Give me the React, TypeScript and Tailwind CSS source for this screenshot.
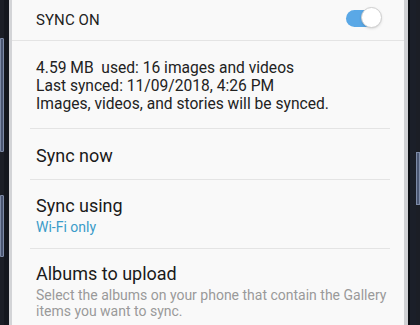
import { useState } from 'react'

// =====================
// Toggle - مفتاح التشغيل
// =====================
function Toggle({ on }: { on: boolean }) {
  return (
    <div className="relative w-[36px] h-[22px] flex items-center">
      <div className={on ? 'w-[34px] h-[17px] rounded-full bg-[#5aa8e6]' : 'w-[34px] h-[17px] rounded-full bg-[#c8c8c8]'} />
      <div className="absolute right-0 top-0 w-[21px] h-[21px] rounded-full bg-white border border-[#cfcfcf] shadow-sm" />
    </div>
  )
}

function Divider({ inset = true }: { inset?: boolean }) {
  return <div className={inset ? 'h-px bg-[#e4e4e4] ml-[18px] mr-[14px]' : 'h-px bg-[#e4e4e4]'} />
}

export default function App() {
  const [on] = useState(true)

  return (
    <div className="w-[420px] h-[325px] flex bg-[#1b1e26] overflow-hidden" style={{ fontFamily: 'Roboto, "Noto Sans", sans-serif' }}>
      {/* left bezel */}
      <div className="w-[9px] flex">
        <div className="w-[4px] flex flex-col">
          <div className="h-[38px]" />
          <div className="h-[114px] bg-[#4a5672] border border-[#7d8aa6] rounded-r-[1px]" />
          <div className="h-[43px]" />
          <div className="h-[62px] bg-[#4a5672] border border-[#7d8aa6] rounded-r-[1px]" />
        </div>
        <div className="flex-1 bg-[#14171e]" />
      </div>
      <div className="w-[3px] bg-[#d3d4d7]" />

      {/* screen */}
      <div className="w-[392px] bg-[#f9f9f9] text-[#1c1c1c] whitespace-nowrap">
        <div className="h-[40px] flex items-center justify-between pl-[24px] pr-[22px]">
          <span className="text-[15px] leading-[20px] tracking-[0.1px] text-[#222]">SYNC ON</span>
          <div className="mb-[4px]">
            <Toggle on={on} />
          </div>
        </div>
        <Divider inset={false} />

        <div className="pl-[24px] pt-[18px] pb-[15px] text-[15.6px] leading-[18px] text-[#222]">
          <p>4.59 MB&nbsp; used: 16 images and videos</p>
          <p>Last synced: 11/09/2018, 4:26 PM</p>
          <p>Images, videos, and stories will be synced.</p>
        </div>
        <Divider />

        <div className="h-[50px] pt-[16px] pl-[24px] text-[18px] leading-[22px] text-[#1a1a1a]">Sync now</div>
        <Divider />

        <div className="h-[68px] pt-[15px] pl-[24px]">
          <p className="text-[18px] leading-[22px] text-[#1a1a1a]">Sync using</p>
          <p className="text-[14px] leading-[20px] text-[#3a9cc9]">Wi-Fi only</p>
        </div>
        <Divider />

        <div className="pl-[24px] pt-[14px]">
          <p className="text-[18px] leading-[22px] text-[#1a1a1a]">Albums to upload</p>
          <p className="text-[14px] leading-[16px] text-[#9a9a9a] mt-[2px]">
            Select the albums on your phone that contain the Gallery<br />items you want to sync.
          </p>
        </div>
      </div>

      {/* right bezel */}
      <div className="w-[4px] bg-[#cfd0d3]" />
      <div className="flex-1 flex">
        <div className="w-[2px] bg-[#0d0f14]" />
        <div className="flex-1 bg-[#1b1f29]" />
        <div className="w-[4px] flex flex-col">
          <div className="h-[152px]" />
          <div className="h-[53px] bg-[#4a5672] border border-[#7d8aa6]" />
        </div>
      </div>
    </div>
  )
}
